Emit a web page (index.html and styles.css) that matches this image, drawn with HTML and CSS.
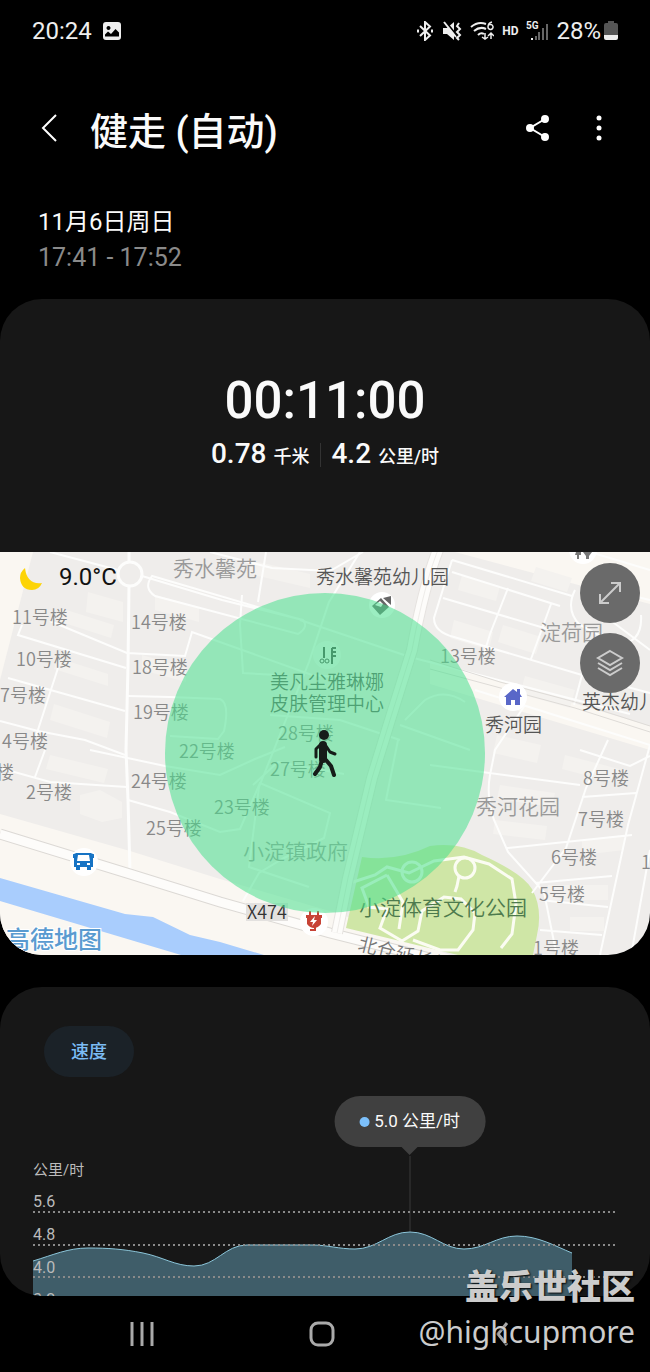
FILE: index.html
```html
<!DOCTYPE html>
<html lang="zh-CN">

<head>
    <meta charset="UTF-8">
    <meta name="viewport" content="width=device-width, initial-scale=1.0">
    <title>健走 (自动)</title>
    <link rel="stylesheet" href="styles.css">
</head>

<body>
    <div class="status-bar">
        <span>20:24</span>
        <svg class="status-photo" width="18" height="18" viewBox="0 0 18 18">
            <path fill="#eee" fill-rule="evenodd" d="M3 0h12q3 0 3 3v12q0 3-3 3H3q-3 0-3-3V3Q0 0 3 0zM5.500 4a2 2 0 1 0 .01 0zM2 14.500h14v-4L12.500 7 8 12 5 9.500l-3 3z" />
        </svg>
        <div class="status-icons">
            <svg width="18" height="20" viewBox="0 0 18 20" fill="none" stroke="#eee" stroke-width="2">
                <path d="M4 5l10 9.500L9 19V1l5 4.500L4 15" />
                <path d="M1 10h2M15 10h2" stroke-width="3" />
            </svg>
            <svg width="20" height="20" viewBox="0 0 20 20">
                <path fill="#eee" d="M1 7h4l7-6v18l-7-6H1z" />
                <path d="M3 0l13 16" stroke="#000" stroke-width="2" />
                <path d="M2 1l12 15" stroke="#eee" stroke-width="2" />
                <path d="M17 2l-2 3 3 3-3 3 3 3-3 3 2 2" stroke="#eee" stroke-width="2" fill="none" />
            </svg>
            <svg width="24" height="20" viewBox="0 0 24 20" fill="none" stroke="#eee" stroke-width="2">
                <path d="M1 6Q8 0 16 3M4 10q6-5 12-2M8 14q3-3 6-1" />
                <path d="M15 12v6m-3-2l3 2 3-2M21 18v-6m-3 3l3-3 3 3" stroke-width="1.500" />
                <path d="M22 1q-4 1-4 5a2.500 2.500 0 1 0 1-2" stroke-width="1.500" />
            </svg>
            <span class="status-hd">HD</span>
            <svg width="22" height="20" viewBox="0 0 22 20">
                <text class="status-5g" x="0" y="8">5G</text>
                <path stroke="#eee" stroke-width="2" d="M6 17v2" />
                <path stroke="#666" stroke-width="2" d="M10 15v4M13 11v8M17 7v12M21 3v16" />
            </svg>
            <span class="status-percent">28%</span>
            <svg width="14" height="20" viewBox="0 0 14 20">
                <path fill="#555" d="M4 0h6v2h2q2 0 2 2v11H0V4q0-2 2-2h2z" />
                <path fill="#eee" d="M0 14h14v3q0 2-2 2H2q-2 0-2-2z" />
            </svg>
        </div>
    </div>

    <header class="header">
        <button class="icon-button" aria-label="返回">
            <svg width="18" height="32" viewBox="0 0 18 32" fill="none" stroke="#fff" stroke-width="2">
                <path d="M16 3L3 16l13 13" />
            </svg>
        </button>
        <h1>健走 (自动)</h1>
        <button class="icon-button" aria-label="分享">
            <svg width="24" height="26" viewBox="0 0 24 26" fill="#fff" stroke="#fff" stroke-width="2">
                <path d="M19 4L4 13l15 9" fill="none" />
                <circle cx="19" cy="4" r="3" />
                <circle cx="4" cy="13" r="3" />
                <circle cx="19" cy="22" r="3" />
            </svg>
        </button>
        <button class="icon-button" aria-label="更多选项">
            <svg width="6" height="26" viewBox="0 0 6 26" fill="#fff">
                <circle cx="3" cy="3" r="2.500" />
                <circle cx="3" cy="13" r="2.500" />
                <circle cx="3" cy="23" r="2.500" />
            </svg>
        </button>
    </header>

    <div class="date">
        <div class="day">11月6日周日</div>
        <div class="time">17:41 - 17:52</div>
    </div>

    <main>
        <section class="card">
            <div class="summary">
                <div class="duration">00:11:00</div>
                <div class="totals">
                    <span>0.78 <small>千米</small></span>
                    <span>4.2 <small>公里/时</small></span>
                </div>
            </div>

            <div class="map">
                <svg class="map-canvas" viewBox="0 552 650 403">
                    <rect y="552" width="650" height="403" fill="#efedeb" />

                    <!-- open land -->
                    <g fill="#faf7f2">
                        <path d="M0 552h33L0 680z" />
                        <path d="M0 814l130 37 90 28 120 35 110 41H0z" />
                        <path d="M455 552l195 52v-52z" />
                        <path d="M430 660l220 66v24l-220-66z" />
                    </g>

                    <!-- buildings -->
                    <g fill="#f4f2ef">
                        <path d="M88 592l35 10v20l-37-10zM60 608l54 17-3 13-53-17zM58 658l50 16v12l-54-17zM54 704l56 18-3 16-57-18zM50 755l58 14-4 14-58-14z" />
                        <path d="M80 795l20-5 22 12v16l-20 4-22-8zM155 595l44 12v15l-44-12zM142 655l44 13v14l-44-12zM250 560l60 14v14l-60-14z" />
                        <path d="M462 575l38 11-4 15-38-11zM536 567l36 11-5 14-36-11zM454 620l39 12-4 18-39-12zM503 625l38 12-5 17-38-12zM525 676l50 14-5 18-50-14z" />
                        <path d="M497 735l44 10-4 18-44-10zM565 755l54 14-3 14-54-14zM500 785l55 8-3 14-55-8zM495 820l52 6-2 14-52-6zM582 840l42-5v15l-42 5zM570 917h34v14h-34zM548 885h60v15h-60z" />
                    </g>

                    <!-- river -->
                    <path fill="#a9cdfd" d="M0 878l125 36 28 3 37 18 30 7 44 13H181L0 901z" />

                    <!-- park -->
                    <path fill="#cfe6a6" d="M362 857q35 5 68-11 30-4 52 9 40 18 50 34 11 20 5 46l-4 20h-75l-112-27z" />
                    <g fill="none" stroke="#fbfcf2" stroke-width="3">
                        <path d="M350 883l25-8 12-8 22 6 25-12 30-4 25 7 23 15 4 25-4 30-11 14" />
                        <path d="M387 875l-25 13 7 19 18 2-7 19 22 13 16-10 4-20 22-14 17 2 14 14-2 17-15 20h-18l-27-10M459 876l-2 10-2 6M387 875l16 27-4 27" />
                        <circle cx="412" cy="872" r="10" />
                        <circle cx="465" cy="868" r="10" />
                    </g>

                    <!-- small roads -->
                    <g fill="none" stroke="#fdfdfc" stroke-width="2">
                        <circle cx="130" cy="574" r="12" stroke-width="3" />
                        <path d="M129 552v10M129 586l-1 80-2 84 2 50 2 72" stroke-width="3" />
                        <path d="M50 552l68 18M142 576l80 24 81 20q6 7-5 14L155 596q-12-8-3-20l150 44" />
                        <path d="M22 625l-4 10 108 33M50 621l77 32 58 3 7-24 120 43 60 5M8 678l117 33M58 668l-22 68M0 721l38 10 47 9 40 15M45 750l-10 27M0 768l50 14 77 5M128 696l42 1 50 2q10 4 4 32l-6 8-48-3M90 750l75 16 55 9 35-16 30-12M128 800l42 12 50 20 20-3 20-46 70 30-6 25-40 20-25 15-16 28" />
                        <path d="M210 552l62 16 58 3 33-19M360 552l-31 50-20 60-20 50-30 75-10 80 60 20M242 595l-2 30 3 48 35 2M266 552l-8 50M300 620l110 37 220 57M253 785l25-23 66 12" />
                        <path d="M452 560l120 36M452 572l108 34M443 598l108 32M508 588l-18 46-6 20M551 604l-20 55M452 560l-18 58q0 14 20 19l128 38 68 18M575 590q-10 20 5 35l37 20q26-2 24-30M582 675l-8 30M610 620l40 30M600 588l50 12" />
                        <path d="M590 552l60 18M475 690l175 55M525 705l-30 45-5 25q-4 22 4 45l14 32 36 40 12 60M608 740l-22 48-20 60-34 45M430 765l150 20M580 750l50 16 20-10M582 797l54-4M507 848l125-13M535 883l77-7M540 900l68 7M540 930l62 5M650 745l-22 80-28 130M650 850l-18 100" />
                        <path d="M398 740l-12 60 55 8M405 720l20-20q20-12 40 2M400 725l70 25M270 715l70 5 60 20" />
                    </g>

                    <!-- main roads -->
                    <g fill="none">
                        <path stroke="#dcd9d5" stroke-width="11" d="M0 834l130 40 90 28 110 31 100 25" />
                        <path stroke="#fdfcfa" stroke-width="9" d="M0 834l130 40 90 28 110 31 100 25" />
                        <path stroke="#e6e3e0" stroke-width="12" d="M440 545q-15 35-28 105l-22 70-18 58-24 100-11 55" />
                        <path stroke="#fdfcfa" stroke-width="10" d="M440 545q-15 35-28 105l-22 70-18 58-24 100-11 55" />
                        <path stroke="#eeece9" d="M440 545q-15 35-28 105l-22 70-18 58-24 100-11 55" />
                        <path stroke="#dedbd7" d="M430 660l70 22 75 20 75 24M430 669l145 39 75 24" />
                    </g>

                    <!-- building numbers -->
                    <g class="label-number">
                        <text x="12" y="624">11号楼</text>
                        <text x="16" y="666">10号楼</text>
                        <text x="0" y="702">7号楼</text>
                        <text x="2" y="748">4号楼</text>
                        <text x="-4" y="779">楼</text>
                        <text x="26" y="799">2号楼</text>
                        <text x="131" y="629">14号楼</text>
                        <text x="132" y="674">18号楼</text>
                        <text x="133" y="719">19号楼</text>
                        <text x="131" y="788">24号楼</text>
                        <text x="146" y="835">25号楼</text>
                        <text x="179" y="758">22号楼</text>
                        <text x="214" y="814">23号楼</text>
                        <text x="278" y="740">28号楼</text>
                        <text x="270" y="776">27号楼</text>
                        <text x="440" y="663">13号楼</text>
                        <text x="583" y="785">8号楼</text>
                        <text x="578" y="826">7号楼</text>
                        <text x="551" y="864">6号楼</text>
                        <text x="539" y="901">5号楼</text>
                        <text x="533" y="955">1号楼</text>
                        <text x="641" y="869">1</text>
                    </g>

                    <!-- areas and places -->
                    <g class="label-area">
                        <text x="173" y="576">秀水馨苑</text>
                        <text x="540" y="640">淀荷园</text>
                        <text x="476" y="814">秀河花园</text>
                        <text x="243" y="859">小淀镇政府</text>
                        <text class="label-park" x="359" y="915">小淀体育文化公园</text>
                    </g>
                    <g class="label-place">
                        <text x="316" y="584">秀水馨苑幼儿园</text>
                        <text x="270" y="689">美凡尘雅琳娜</text>
                        <text x="270" y="711">皮肤管理中心</text>
                        <text x="485" y="732">秀河园</text>
                        <text x="582" y="709">英杰幼儿</text>
                    </g>
                    <rect x="246" y="903" width="42" height="18" fill="#e3e1df" />
                    <text class="label-road" x="247" y="919">X474</text>
                    <text class="label-street" transform="translate(357 950) rotate(14)">北仓延长线</text>

                    <!-- place pins -->
                    <g fill="#fff">
                        <circle cx="382" cy="605" r="13" />
                        <circle cx="327" cy="655" r="14" opacity=".5" />
                        <circle cx="513" cy="697" r="14" />
                        <circle cx="84" cy="862" r="14" />
                        <circle cx="314" cy="922" r="14" />
                        <circle cx="583" cy="550" r="14" />
                    </g>
                    <path fill="#666" d="M372 606l9-8 8 9-9 8zM383 598l8-2v9z" />
                    <path fill="#fff" d="M375 605l5-4 3 3-2 3z" />
                    <path fill="none" stroke="#444" stroke-width="2" d="M324 647v11M332 664v-16M332 648h4M332 652h4M332 656h4" />
                    <circle cx="322" cy="661" r="2" fill="none" stroke="#444" />
                    <circle cx="327" cy="661" r="2" fill="none" stroke="#444" />
                    <path fill="#5967c8" d="M504 697l9-8 4 3v-3h3v5l2 3h-2v8h-5v-5h-4v5h-5v-8z" />
                    <path fill="#1673c4" d="M76 853h15l2 5v9h-2v3h-4v-3h-7v3h-4v-3h-2v-9z" />
                    <path fill="#fff" d="M78 855h11l1 6H77zM77 863h3v2h-3zM87 863h3v2h-3z" />
                    <path fill="none" stroke="#1673c4" stroke-width="2" d="M74 858v-3l3-1M93 858v-3l-3-1" />
                    <path fill="#c74336" d="M306 915h16v3h-1v6q-3 4-7 4t-7-4v-6h-1z" />
                    <path fill="none" stroke="#c74336" stroke-width="2" d="M310 911v5M318 911v5M315 927v3h-5" />
                    <path fill="#fff" d="M315 916l-5 6h3l-1 4 5-6h-3z" />
                    <path fill="#777" d="M576 552h5v3h-2v4h-2v-4h-2zM583 552h9l-3 4v3h-3v-3z" />

                    <!-- accuracy circle and walker -->
                    <circle cx="325" cy="753" r="160" fill="#49e08e" opacity=".55" />
                    <g stroke="#171c19" stroke-linecap="round" stroke-linejoin="round" fill="none">
                        <circle cx="324" cy="735" r="5" fill="#171c19" stroke="none" />
                        <path d="M323 745v14" stroke-width="8" />
                        <path d="M321 744l-5 5v8M326 746l4 6 5 2" stroke-width="3" />
                        <path d="M322 760l-2 7-5 7M326 760l5 6 3 9" stroke-width="4" />
                    </g>

                    <!-- weather -->
                    <path fill="#fdd406" d="M25 568q-5 4-5 10 1 12 12 12 7 0 10-7-15 2-17-15z" />
                    <text class="temperature" x="59" y="585">9.0°C</text>
                    <text class="map-brand" x="6" y="948">高德地图</text>
                </svg>

                <div class="map-buttons">
                    <button class="map-button" aria-label="展开地图">
                        <svg width="24" height="24" viewBox="0 0 24 24" fill="none" stroke="#ccc" stroke-width="2">
                            <path d="M2 22L22 2M13 2h9v9M2 13v9h9" />
                        </svg>
                    </button>
                    <button class="map-button" aria-label="地图图层">
                        <svg width="28" height="28" viewBox="0 0 28 28" fill="none" stroke="#ccc" stroke-width="2">
                            <path d="M14 2l12 7-12 7L2 9zM2 14l12 7 12-7M2 19l12 7 12-7" />
                        </svg>
                    </button>
                </div>
            </div>
        </section>

        <section class="card speed-card">
            <button class="chip">速度</button>
            <div class="chart">
                <div class="tooltip">5.0 公里/时</div>
                <svg class="chart-canvas" viewBox="0 0 584 140">
                    <path class="marker" d="M377 0v76" />
                    <path class="area" d="M0 105C20 99 35 92 55 92S90 93 110 97S142 110 161 110C183 110 192 89 214 89H280C294 89 306 93 322 93C344 93 355 76 377 76S410 93 431 93S463 80 484 80C505 80 522 90 539 97V140H0z" />
                    <path class="line" d="M0 105C20 99 35 92 55 92S90 93 110 97S142 110 161 110C183 110 192 89 214 89H280C294 89 306 93 322 93C344 93 355 76 377 76S410 93 431 93S463 80 484 80C505 80 522 90 539 97" />
                    <path class="grid" d="M0 56h584M0 89h584M0 121h584" />
                    <g class="axis">
                        <text class="axis-unit" x="0" y="19">公里/时</text>
                        <text x="0" y="51">5.6</text>
                        <text x="0" y="84">4.8</text>
                        <text x="0" y="117">4.0</text>
                        <text x="0" y="149">3.2</text>
                    </g>
                </svg>
            </div>
        </section>
    </main>

    <footer class="nav-bar">
        <button class="icon-button" aria-label="最近任务">
            <svg width="24" height="26" viewBox="0 0 24 26" stroke="#aaa" stroke-width="3">
                <path d="M2 1v24M12 1v24M22 1v24" />
            </svg>
        </button>
        <button class="icon-button" aria-label="主屏幕">
            <svg width="26" height="26" viewBox="0 0 26 26" fill="none" stroke="#aaa" stroke-width="3">
                <rect x="2" y="2" width="22" height="22" rx="7" />
            </svg>
        </button>
        <button class="icon-button" aria-label="返回上一页">
            <svg width="14" height="26" viewBox="0 0 14 26" fill="none" stroke="#aaa" stroke-width="3">
                <path d="M12 2L3 13l9 11" />
            </svg>
        </button>
        <div class="watermark">
            <b>盖乐世社区</b>
            <span>@highcupmore</span>
        </div>
    </footer>
</body>

</html>
```
FILE: styles.css
```css
body {
    margin: 0;
    background-color: #000;
    color: #fafafa;
    font-family: Roboto, "Noto Sans CJK SC", sans-serif;
}

button {
    border: none;
    padding: 0;
    font-family: inherit;
    cursor: pointer;
}

svg {
    display: block;
}

.status-bar {
    display: flex;
    align-items: center;
    height: 62px;
    padding: 0 32px;
    font-size: 24px;
    color: #eee;
}

.status-photo {
    margin-left: 11px;
}

.status-icons {
    display: flex;
    align-items: center;
    gap: 8px;
    margin-left: auto;
}

.status-hd {
    font-size: 12px;
    font-weight: 700;
}

.status-5g {
    font-size: 10px;
    font-weight: 700;
    fill: #eee;
}

.status-percent {
    margin-right: -5px;
}

.header {
    display: flex;
    align-items: center;
    height: 132px;
    padding: 0 33px 0 31px;
}

.header h1 {
    flex: 1;
    margin: 0 0 0 23px;
    font-size: 38px;
    font-weight: 500;
}

.icon-button {
    display: flex;
    justify-content: center;
    width: 36px;
    background: none;
}

.header .icon-button + .icon-button {
    margin-left: 25px;
}

.date {
    padding: 10px 38px 0;
    height: 95px;
}

.day {
    font-size: 24px;
    line-height: 36px;
}

.time {
    font-size: 25px;
    line-height: 36px;
    color: #8a8a8a;
}

.card {
    overflow: hidden;
    border-radius: 42px;
    background-color: #171717;
}

.summary {
    padding: 68px 0 77px;
    text-align: center;
    font-weight: 500;
}

.duration {
    font-size: 51px;
    line-height: 68px;
}

.totals {
    display: flex;
    justify-content: center;
    align-items: center;
    font-size: 28px;
    line-height: 37px;
}

.totals small {
    font-size: 18px;
}

.totals span + span {
    margin-left: 11px;
    padding-left: 11px;
    background: linear-gradient(#333, #333) left center / 1px 24px no-repeat;
}

.map {
    position: relative;
}

.map-canvas,
.chart-canvas {
    width: 100%;
}

.label-number,
.label-area,
.label-place,
.label-street,
.label-road {
    font-family: "Noto Sans CJK SC", sans-serif;
    font-weight: 350;
}

.label-number {
    font-size: 18px;
    fill: #888;
}

.label-area {
    font-size: 21px;
    fill: #999;
}

.label-area .label-park {
    fill: #4d7a4d;
}

.label-place {
    font-size: 19px;
    fill: #555;
}

.label-street {
    font-size: 19px;
    fill: #777;
}

.label-road {
    font-size: 18px;
    fill: #333;
}

.temperature {
    font-size: 24px;
    fill: #111;
}

.map-brand {
    font-size: 24px;
    font-weight: 500;
    fill: #5a9bd0;
    stroke: #fff;
    stroke-width: 2px;
    paint-order: stroke;
}

.map-buttons {
    position: absolute;
    top: 11px;
    right: 10px;
    display: grid;
    gap: 10px;
}

.map-button {
    display: grid;
    place-items: center;
    width: 60px;
    height: 60px;
    border-radius: 50%;
    background-color: #6a6a6a;
}

.speed-card {
    margin-top: 32px;
    padding: 39px 33px 0;
}

.chip {
    margin-left: 11px;
    padding: 0 27px;
    border-radius: 26px;
    background-color: #1b2228;
    color: #7cbcf5;
    font-size: 18px;
    font-weight: 500;
    line-height: 51px;
}

.chart {
    position: relative;
    padding-top: 79px;
}

.tooltip {
    position: absolute;
    top: 19px;
    left: 64.5%;
    transform: translateX(-50%);
    display: flex;
    align-items: center;
    gap: 5px;
    padding: 0 25px;
    border-radius: 26px;
    background-color: #404040;
    font-size: 17px;
    line-height: 51px;
    white-space: nowrap;
}

.tooltip::before {
    content: "";
    width: 10px;
    height: 10px;
    border-radius: 50%;
    background-color: #7cc0fb;
}

.tooltip::after {
    content: "";
    position: absolute;
    top: 100%;
    left: 50%;
    margin-left: -8px;
    border: 8px solid transparent;
    border-top-color: #404040;
}

.marker {
    stroke: #3a3a3a;
}

.area {
    fill: #3f5d69;
}

.line {
    fill: none;
    stroke: #8cc6da;
}

.grid {
    stroke: #8a8a8a;
    stroke-width: 2px;
    stroke-dasharray: 2 3;
}

.axis {
    font-size: 16px;
    fill: #bbb;
}

.axis-unit {
    font-size: 15px;
}

.nav-bar {
    position: relative;
    display: flex;
    justify-content: space-between;
    align-items: center;
    height: 76px;
    padding: 0 20% 0 19%;
}

.watermark {
    position: absolute;
    right: 15px;
    bottom: 18px;
    text-align: right;
    color: #ccc;
    font-family: "Noto Sans", "Noto Sans CJK SC", sans-serif;
    text-shadow: 1px 1px 2px #000;
}

.watermark b,
.watermark span {
    display: block;
    line-height: 45px;
}

.watermark b {
    font-size: 34px;
    font-weight: 900;
}

.watermark span {
    font-size: 30px;
}
```
